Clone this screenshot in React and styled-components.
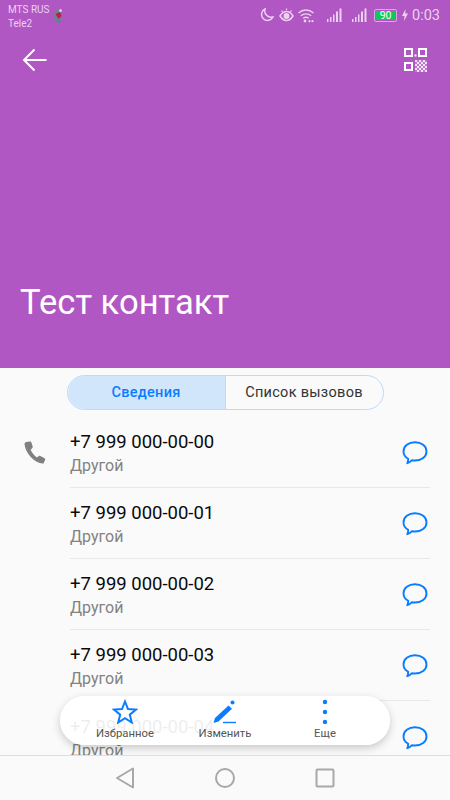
import React from 'react';
import styled, { createGlobalStyle } from 'styled-components';

const Global = createGlobalStyle`
  html, body { margin: 0; padding: 0; background: #fafafa; }
  * { box-sizing: border-box; }
`;

const Screen = styled.div`
  position: relative;
  width: 450px;
  height: 800px;
  overflow: hidden;
  display: flex;
  flex-direction: column;
  background: #fafafa;
  font-family: Roboto, "Noto Sans", sans-serif;
`;

const Header = styled.header`
  height: 368px;
  flex: none;
  background: #b057c3;
  display: flex;
  flex-direction: column;
  color: #fff;
`;

const StatusBar = styled.div`
  height: 30px;
  padding: 3px 10px 0 8px;
  display: flex;
  justify-content: space-between;
  color: #ecd2f1;
`;

const Carriers = styled.div`
  display: flex;
  align-items: flex-start;
  gap: 4px;
  font-size: 10px;
  line-height: 14px;
`;

const StatusRight = styled.div`
  display: flex;
  align-items: center;
  height: 24px;
`;

const StatusSlot = styled.span`
  display: flex;
  margin-right: ${p => p.$gap}px;
`;

const Clock = styled.span`
  font-size: 14.5px;
`;

const Battery = styled.span`
  width: 23px;
  height: 13px;
  border: 1px solid #d9a8e3;
  border-radius: 2px;
  padding: 1px;
  display: flex;
`;

const BatteryFill = styled.span`
  flex: 1;
  background: #12c85a;
  color: #fff;
  font-size: 10.5px;
  line-height: 9px;
  text-align: center;
`;

const TopActions = styled.div`
  display: flex;
  justify-content: space-between;
  align-items: center;
  padding: 0 22px 0 22px;
  height: 60px;
`;

const ContactName = styled.h1`
  margin: auto 0 0;
  padding: 0 0 46px 20px;
  font-size: 34.6px;
  line-height: 40px;
  font-weight: 400;
`;

const Tabs = styled.div`
  margin: 7px auto 0;
  width: 317px;
  height: 35px;
  flex: none;
  display: flex;
  border: 1px solid #bedafa;
  border-radius: 18px;
  overflow: hidden;
`;

const Tab = styled.div`
  display: flex;
  align-items: center;
  justify-content: center;
  font-size: 14.5px;
  letter-spacing: 0.3px;
  width: ${p => (p.$active ? '158px' : 'auto')};
  flex: ${p => (p.$active ? 'none' : '1')};
  background: ${p => (p.$active ? '#d2e6fb' : 'transparent')};
  color: ${p => (p.$active ? '#0a7dff' : '#333')};
  font-weight: ${p => (p.$active ? 500 : 400)};
  border-right: ${p => (p.$active ? '1px solid #bedafa' : 'none')};
`;

const List = styled.div`
  margin-top: 7px;
  flex: none;
  display: flex;
  flex-direction: column;
`;

const Row = styled.div`
  height: 71px;
  display: flex;
  align-items: stretch;
`;

const RowIcon = styled.div`
  width: 70px;
  flex: none;
  padding: 24px 0 0 23px;
`;

const RowBody = styled.div`
  flex: 1;
  margin-right: 20px;
  display: flex;
  justify-content: space-between;
  align-items: center;
  border-bottom: ${p => (p.$last ? 'none' : '1px solid #e8e8e8')};
`;

const RowText = styled.div`
  padding-top: 4px;
`;

const PhoneNumber = styled.div`
  font-size: 18.5px;
  line-height: 24px;
  color: #0a0a0a;
`;

const Label = styled.div`
  font-size: 16px;
  line-height: 24px;
  color: #828282;
`;

const Chat = styled.div`
  width: 26px;
  height: 24px;
  margin: 2px 2px 0 0;
`;

const ActionBar = styled.div`
  position: absolute;
  left: 60px;
  top: 696px;
  width: 330px;
  height: 49px;
  display: flex;
  justify-content: center;
  background: rgba(255, 255, 255, 0.93);
  border-radius: 25px;
  box-shadow: 0 3px 8px rgba(0, 0, 0, 0.2);
  padding-top: 3px;
`;

const Action = styled.div`
  width: 100px;
  display: flex;
  flex-direction: column;
  align-items: center;
  gap: 3px;
  font-size: 11.3px;
  line-height: 14px;
  color: #555;
`;

const NavBar = styled.nav`
  position: absolute;
  left: 0;
  right: 0;
  bottom: 0;
  height: 45px;
  background: #fafafa;
  border-top: 1px solid #dedede;
  display: flex;
  align-items: center;
  justify-content: center;
`;

const NavSlot = styled.div`
  width: 100px;
  display: flex;
  justify-content: center;
`;

const StickerArt = styled.svg`
  margin-top: 5px;
`;

const Moon = () => (
  <svg width="14" height="14" viewBox="0 0 14 14" fill="none" stroke="#ecd2f1" strokeWidth="1.500">
    <path d="M5 1a6 6 0 1 0 8 8A6.500 6.500 0 0 1 5 1z" />
  </svg>
);

const Eye = () => (
  <svg width="15" height="15" viewBox="0 0 15 15" fill="none" stroke="#ecd2f1" strokeWidth="1.500">
    <path d="M1 8c1.800-3 3.800-4.500 6.500-4.500S12.200 5 14 8c-1.800 2.800-3.800 4.500-6.500 4.500S2.800 10.800 1 8z" />
    <circle cx="7.500" cy="8" r="2.200" fill="#ecd2f1" />
    <path d="M2.500 2.500 3.500 4M7.500 0.500V2M12.500 2.500 11.500 4" strokeWidth="1.200" />
  </svg>
);

const Wifi = () => (
  <svg width="16" height="15" viewBox="0 0 16 15" fill="none" stroke="#ecd2f1" strokeWidth="1.300">
    <path d="M0.500 5c4.500-4 10.500-4 15 0M2.800 7.800c3-2.500 7.400-2.500 10.400 0M5.200 10.300c1.600-1.200 4-1.200 5.600 0" />
    <circle cx="7" cy="13" r="1.400" fill="#ecd2f1" stroke="none" />
    <circle cx="11.500" cy="13.200" r="1.100" fill="#ecd2f1" stroke="none" />
    <circle cx="14.500" cy="13.200" r="1.100" fill="#ecd2f1" stroke="none" />
  </svg>
);

const Signal = () => (
  <svg width="15" height="14" viewBox="0 0 15 14" fill="#ecd2f1">
    <rect x="0" y="11" width="1.500" height="3" />
    <rect x="3" y="9" width="1.500" height="5" />
    <rect x="6" y="6.500" width="1.500" height="7.500" />
    <rect x="9" y="3.500" width="2" height="10.500" />
    <rect x="12.500" y="0.500" width="2" height="13.500" />
  </svg>
);

const Bolt = () => (
  <svg width="6" height="12" viewBox="0 0 6 12" fill="#ecd2f1">
    <path d="M3.500 0 0 7h2.500L2 12l4-7.500H3.300z" />
  </svg>
);

const Back = () => (
  <svg width="26" height="24" viewBox="0 0 26 24" fill="none" stroke="#fff" strokeWidth="2">
    <path d="M24.500 12H2M12.500 1.500 2 12l10.500 10.500" />
  </svg>
);

const qrDots = [];
for (let y = 0; y < 6; y += 1) {
  for (let x = 0; x < 6; x += 1) {
    if ((x + y) % 2 === 0) qrDots.push([12 + x * 2, 12 + y * 2]);
  }
}

const Qr = () => (
  <svg width="24" height="24" viewBox="0 0 24 24" fill="none">
    <g stroke="#fff" strokeWidth="2">
      <rect x="1" y="1" width="7" height="7" />
      <rect x="15" y="1" width="7" height="7" />
      <rect x="1" y="15" width="7" height="7" />
    </g>
    <rect x="10.500" y="6.500" width="2" height="2" fill="#fff" />
    <path d="M11 12h12v12H11z" fill="#fff" fillOpacity="0.2" />
    <g fill="#fff" fillOpacity="0.8">
      {qrDots.map(([x, y]) => <rect key={`${x}-${y}`} x={x - 1} y={y} width="2" height="2" />)}
    </g>
  </svg>
);

const Phone = () => (
  <svg width="24" height="24" viewBox="0 0 24 24" fill="#808080">
    <path d="M3.500 1 7 0.500c.8 0 1.200.4 1.400 1l1.300 4c.2.600 0 1.100-.4 1.500L7.700 8.800c1 2.700 3.200 5.600 6.200 7.700l2-1.500c.5-.3 1-.4 1.500-.1l4.200 2.300c.6.300.8.900.6 1.500l-1.300 3c-.3.700-1 1-1.800.9C10.500 21 2.800 12.500 1.500 3.300 1.400 2 2.300 1.200 3.500 1z" />
  </svg>
);

const ChatIcon = () => (
  <svg width="26" height="24" viewBox="0 0 26 24" fill="none" stroke="#0a7dff" strokeWidth="1.900" strokeLinejoin="round">
    <path d="M13 1.200c6.500 0 11.500 4 11.500 9.200S19.500 19.500 13 19.500c-1 0-2-.1-3-.3-1.300 1.400-3 2.500-4.700 3 .7-1.500 1-2.900.9-4.400C3.200 16 1.500 13.400 1.500 10.400 1.500 5.200 6.500 1.200 13 1.200z" />
  </svg>
);

const Star = () => (
  <svg width="26" height="25" viewBox="0 0 26 25" fill="none" stroke="#0a7dff" strokeWidth="2" strokeLinejoin="miter">
    <path d="M13 2.500 16 10l8 .6-6.200 5.100 2 7.800L13 19.200 6.200 23.500l2-7.800L2 10.600l8-.6z" />
  </svg>
);

const Pen = () => (
  <svg width="24" height="25" viewBox="0 0 24 25" fill="#0a7dff">
    <path d="M15.500 6.500 19 9.800 5.500 22.500 0.500 24l1.500-5z" />
    <circle cx="19.500" cy="3.500" r="2" />
    <rect x="10" y="22.800" width="13" height="1.400" />
  </svg>
);

const Dots = () => (
  <svg width="6" height="25" viewBox="0 0 6 25" fill="#0a7dff">
    <circle cx="3" cy="3" r="2.200" />
    <circle cx="3" cy="13" r="2.200" />
    <circle cx="3" cy="23" r="2.200" />
  </svg>
);

const NavBack = () => (
  <svg width="20" height="22" viewBox="0 0 20 22" fill="none" stroke="#a8a8a8" strokeWidth="2" strokeLinejoin="round">
    <path d="M18 1.500v19L2 11z" />
  </svg>
);

const NavHome = () => (
  <svg width="20" height="20" viewBox="0 0 20 20" fill="none" stroke="#a8a8a8" strokeWidth="2">
    <circle cx="10" cy="10" r="9" />
  </svg>
);

const NavRecent = () => (
  <svg width="20" height="20" viewBox="0 0 20 20" fill="none" stroke="#a8a8a8" strokeWidth="2">
    <rect x="1.500" y="1.500" width="17" height="17" rx="1" />
  </svg>
);

const Sticker = () => (
  <StickerArt width="10" height="15" viewBox="0 0 10 15">
    <ellipse cx="5" cy="8" rx="4" ry="6.500" fill="#6f7f9c" />
    <path d="M2.500 6 7 4l1.500 4-3 3z" fill="#b8243f" />
    <circle cx="7.500" cy="2.500" r="1.500" fill="#d5d0dc" />
    <path d="M2 11.500 6 14l2-1" stroke="#3f8f9c" strokeWidth="1.300" fill="none" />
  </StickerArt>
);

const numbers = ['+7 999 000-00-00', '+7 999 000-00-01', '+7 999 000-00-02', '+7 999 000-00-03', '+7 999 000-00-04'];

export default function App() {
  return (
    <Screen>
      <Global />
      <Header>
        <StatusBar>
          <Carriers>
            <div>MTS RUS<br />Tele2</div>
            <Sticker />
          </Carriers>
          <StatusRight>
            <StatusSlot $gap={5}><Moon /></StatusSlot>
            <StatusSlot $gap={4}><Eye /></StatusSlot>
            <StatusSlot $gap={13}><Wifi /></StatusSlot>
            <StatusSlot $gap={10}><Signal /></StatusSlot>
            <StatusSlot $gap={7}><Signal /></StatusSlot>
            <StatusSlot $gap={5}><Battery><BatteryFill>90</BatteryFill></Battery></StatusSlot>
            <StatusSlot $gap={4}><Bolt /></StatusSlot>
            <Clock>0:03</Clock>
          </StatusRight>
        </StatusBar>
        <TopActions>
          <Back />
          <Qr />
        </TopActions>
        <ContactName>Тест контакт</ContactName>
      </Header>
      <Tabs>
        <Tab $active>Сведения</Tab>
        <Tab>Список вызовов</Tab>
      </Tabs>
      <List>
        {numbers.map((n, i) => (
          <Row key={n}>
            <RowIcon>{i === 0 && <Phone />}</RowIcon>
            <RowBody $last={i === numbers.length - 1}>
              <RowText>
                <PhoneNumber>{n}</PhoneNumber>
                <Label>Другой</Label>
              </RowText>
              <Chat><ChatIcon /></Chat>
            </RowBody>
          </Row>
        ))}
      </List>
      <ActionBar>
        <Action><Star />Избранное</Action>
        <Action><Pen />Изменить</Action>
        <Action><Dots />Еще</Action>
      </ActionBar>
      <NavBar>
        <NavSlot><NavBack /></NavSlot>
        <NavSlot><NavHome /></NavSlot>
        <NavSlot><NavRecent /></NavSlot>
      </NavBar>
    </Screen>
  );
}
